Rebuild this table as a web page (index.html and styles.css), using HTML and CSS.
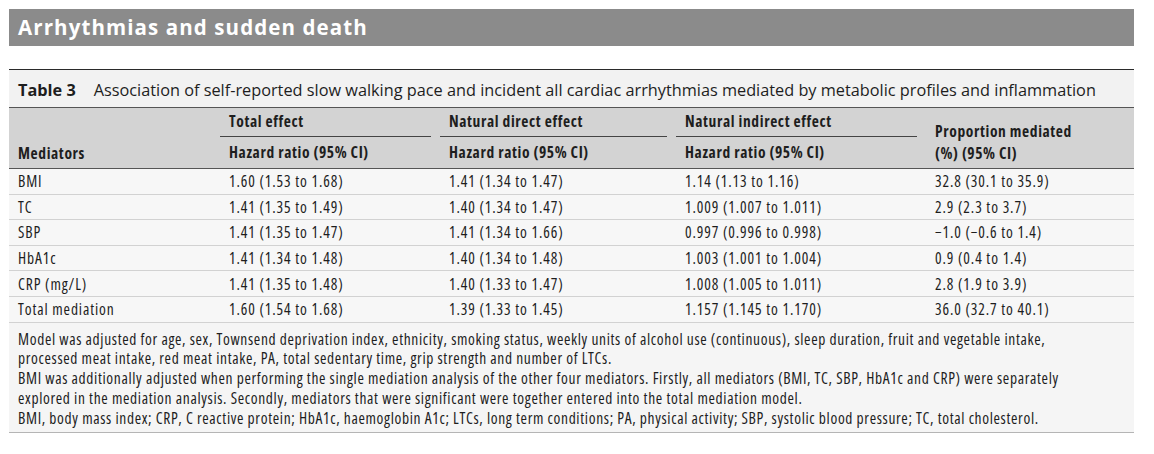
FILE: index.html
```html
<!DOCTYPE html>
<html lang="en">
<head>
<meta charset="utf-8">
<title>Arrhythmias and sudden death</title>
<link rel="stylesheet" href="styles.css">
</head>
<body>
<div class="page">
  <div class="section-bar">Arrhythmias and sudden death</div>
  <table class="data">
    <colgroup>
      <col class="c1"><col class="c2"><col class="c3"><col class="c4"><col class="c5">
    </colgroup>
    <thead>
      <tr class="caption-row">
        <th colspan="5"><span class="tnum">Table 3</span>Association of self-reported slow walking pace and incident all cardiac arrhythmias mediated by metabolic profiles and inflammation</th>
      </tr>
      <tr class="h1">
        <th rowspan="2" class="bottom">Mediators</th>
        <th class="grp"><div>Total effect</div></th>
        <th class="grp"><div>Natural direct effect</div></th>
        <th class="grp"><div>Natural indirect effect</div></th>
        <th rowspan="2" class="bottom">Proportion mediated<br>(%) (95%&#8201;CI)</th>
      </tr>
      <tr class="h2">
        <th>Hazard ratio (95%&#8201;CI)</th>
        <th>Hazard ratio (95%&#8201;CI)</th>
        <th>Hazard ratio (95%&#8201;CI)</th>
      </tr>
    </thead>
    <tbody>
      <tr><td>BMI</td><td>1.60 (1.53 to 1.68)</td><td>1.41 (1.34 to 1.47)</td><td>1.14 (1.13 to 1.16)</td><td>32.8 (30.1 to 35.9)</td></tr>
      <tr><td>TC</td><td>1.41 (1.35 to 1.49)</td><td>1.40 (1.34 to 1.47)</td><td>1.009 (1.007 to 1.011)</td><td>2.9 (2.3 to 3.7)</td></tr>
      <tr><td>SBP</td><td>1.41 (1.35 to 1.47)</td><td>1.41 (1.34 to 1.66)</td><td>0.997 (0.996 to 0.998)</td><td>&minus;1.0 (&minus;0.6 to 1.4)</td></tr>
      <tr><td>HbA1c</td><td>1.41 (1.34 to 1.48)</td><td>1.40 (1.34 to 1.48)</td><td>1.003 (1.001 to 1.004)</td><td>0.9 (0.4 to 1.4)</td></tr>
      <tr><td>CRP (mg/L)</td><td>1.41 (1.35 to 1.48)</td><td>1.40 (1.33 to 1.47)</td><td>1.008 (1.005 to 1.011)</td><td>2.8 (1.9 to 3.9)</td></tr>
      <tr><td>Total mediation</td><td>1.60 (1.54 to 1.68)</td><td>1.39 (1.33 to 1.45)</td><td>1.157 (1.145 to 1.170)</td><td>36.0 (32.7 to 40.1)</td></tr>
    </tbody>
    <tfoot>
      <tr>
        <td colspan="5">
          <p>Model was adjusted for age, sex, Townsend deprivation index, ethnicity, smoking status, weekly units of alcohol use (continuous), sleep duration, fruit and vegetable intake, processed meat intake, red meat intake, PA, total sedentary time, grip strength and number of LTCs.</p>
          <p>BMI was additionally adjusted when performing the single mediation analysis of the other four mediators. Firstly, all mediators (BMI, TC, SBP, HbA1c and CRP) were separately explored in the mediation analysis. Secondly, mediators that were significant were together entered into the total mediation model.</p>
          <p>BMI, body mass index; CRP, C reactive protein; HbA1c, haemoglobin A1c; LTCs, long term conditions; PA, physical activity; SBP, systolic blood pressure; TC, total cholesterol.</p>
        </td>
      </tr>
    </tfoot>
  </table>
</div>
</body>
</html>
```

FILE: styles.css
```css
html, body {
  margin: 0;
  padding: 0;
  background: #ffffff;
}
body {
  font-family: "Open Sans", "Noto Sans", sans-serif;
  font-stretch: 75%;
  color: #1e1e1e;
}
.page {
  padding: 9px 20px 0 9px;
}
.section-bar {
  width: 1125px;
  height: 37px;
  box-sizing: border-box;
  background: #8b8b8b;
  color: #ffffff;
  font-stretch: 100%;
  font-weight: 700;
  font-size: 20.5px;
  letter-spacing: 1.1px;
  line-height: 37px;
  padding-left: 9px;
}
.data {
  margin-top: 23px;
  width: 1125px;
  border-collapse: collapse;
  table-layout: fixed;
  font-size: 15.5px;
  letter-spacing: 0.62px;
}
.c1 { width: 211px; }
.c2 { width: 220px; }
.c3 { width: 236px; }
.c4 { width: 250px; }
.c5 { width: 208px; }
.data th, .data td {
  text-align: left;
  padding: 0 0 0 9px;
  vertical-align: middle;
}
.data .caption-row th {
  border-top: 1px solid #2a2a2a;
  border-bottom: 1px solid #555555;
  background: #f2f2f2;
  height: 35px;
  padding-top: 2px;
  font-weight: 400;
  font-size: 16.3px;
  font-stretch: 100%;
  letter-spacing: 0;
  white-space: nowrap;
}
.tnum {
  font-weight: 700;
  margin-right: 18px;
}
.h1 th, .h2 th {
  background: #d3d3d3;
  font-weight: 700;
}
.h1 th { height: 29px; }
.data .h2 th {
  height: 30px;
  padding-bottom: 1px;
  border-bottom: 1px solid #555555;
}
.data .h1 th.bottom {
  vertical-align: bottom;
  padding-bottom: 4px;
  line-height: 22px;
  border-bottom: 1px solid #555555;
}
.data .h1 th.grp {
  padding: 0 9px 0 0;
  vertical-align: bottom;
}
.h1 th.grp div {
  padding: 0 0 4px 9px;
  border-bottom: 1px solid #444444;
}
.data tbody td {
  height: 24.6px;
  background: #f7f7f7;
  border-bottom: 1px solid #d2d2d2;
  letter-spacing: 0.88px;
}
.data tfoot td {
  background: #f5f5f5;
  border-bottom: 1px solid #b5b5b5;
  padding: 7px 50px 3px 9px;
  letter-spacing: 0.65px;
}
tfoot p {
  margin: 0;
  line-height: 19.8px;
}
```
